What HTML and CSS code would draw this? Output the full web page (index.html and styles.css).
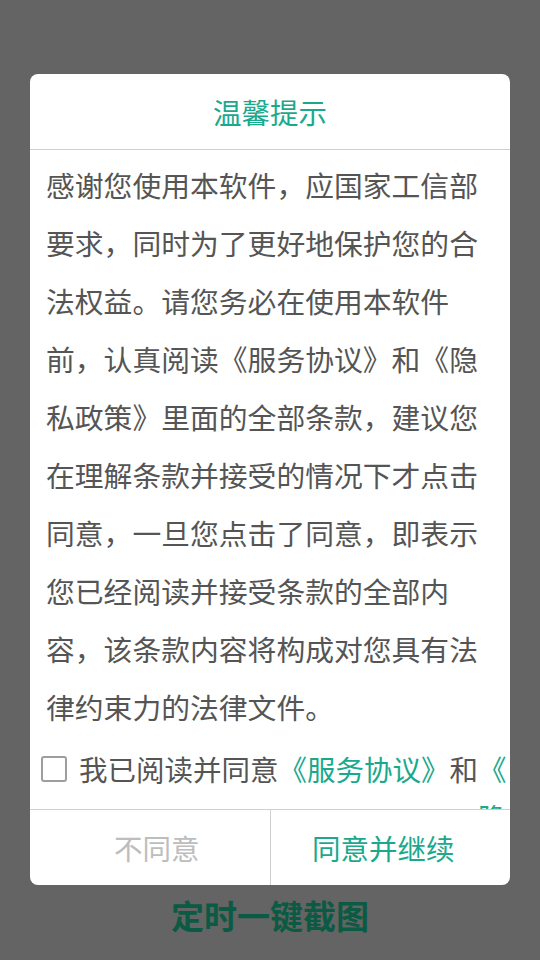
FILE: index.html
```html
<!DOCTYPE html>
<html lang="zh-CN">
<head>
<meta charset="utf-8">
<title>温馨提示</title>
<link rel="stylesheet" href="styles.css">
</head>
<body>
<div class="screen">
  <div class="dialog">
    <div class="dialog-title">温馨提示</div>
    <div class="dialog-body">
      <p class="notice">感谢您使用本软件，应国家工信部要求，同时为了更好地保护您的合法权益。请您务必在使用本软件前，认真阅读《服务协议》和《隐私政策》里面的全部条款，建议您在理解条款并接受的情况下才点击同意，一旦您点击了同意，即表示您已经阅读并接受条款的全部内容，该条款内容将构成对您具有法律约束力的法律文件。</p>
      <div class="agree-row">
        <span class="checkbox"></span>
        <span class="agree-text">我已阅读并同意</span>
        <span class="link">《服务协议》</span>
        <span class="agree-text">和</span>
        <span class="link link-wrap">《隐私政策》</span>
      </div>
    </div>
    <div class="dialog-actions">
      <div class="btn btn-cancel">不同意</div>
      <div class="btn btn-ok">同意并继续</div>
    </div>
  </div>
  <div class="app-name">定时一键截图</div>
</div>
</body>
</html>
```
FILE: styles.css
```css
html, body {
  margin: 0;
  padding: 0;
}
body {
  background: #646464;
  font-family: "Noto Sans CJK SC", "Noto Sans", sans-serif;
}
.screen {
  width: 540px;
  height: 960px;
  padding-top: 74px;
  box-sizing: border-box;
  display: flex;
  flex-direction: column;
  align-items: center;
}
.dialog {
  width: 480px;
  background: #fff;
  border-radius: 8px;
  overflow: hidden;
}
.dialog-title {
  height: 75px;
  line-height: 75px;
  text-align: center;
  font-size: 28.5px;
  color: #1aa98d;
  border-bottom: 1px solid #cfcfcf;
}
.dialog-body {
  height: 659px;
  overflow: hidden;
}
.notice {
  margin: 0;
  padding: 6px 16px 0;
  font-size: 28.8px;
  line-height: 58px;
  color: #555;
}
.agree-row {
  display: flex;
  align-items: flex-start;
  margin-top: 15px;
  padding-left: 11px;
  font-size: 28.5px;
  line-height: 36px;
  white-space: nowrap;
}
.checkbox {
  flex: none;
  width: 22px;
  height: 22px;
  margin: 5px 12px 0 0;
  border: 2px solid #9e9e9e;
  border-radius: 3px;
}
.agree-text {
  flex: none;
  color: #555;
}
.link {
  flex: none;
  color: #1aa98d;
}
.link-wrap {
  flex: 1;
  min-width: 0;
  margin-top: -6px;
  line-height: 48px;
  white-space: normal;
  line-break: anywhere;
  word-break: break-all;
}
.dialog-actions {
  display: flex;
  border-top: 1px solid #d0d0d0;
  height: 75px;
}
.btn {
  flex: 1;
  display: flex;
  align-items: center;
  justify-content: center;
  font-size: 28.5px;
}
.btn-cancel {
  padding-left: 14px;
  color: #bdbdbd;
  border-right: 1px solid #d0d0d0;
}
.btn-ok {
  padding-right: 14px;
  color: #1aa98d;
}
.app-name {
  margin-top: 10px;
  font-size: 33px;
  font-weight: bold;
  color: #0b5a43;
  line-height: 40px;
}
```
